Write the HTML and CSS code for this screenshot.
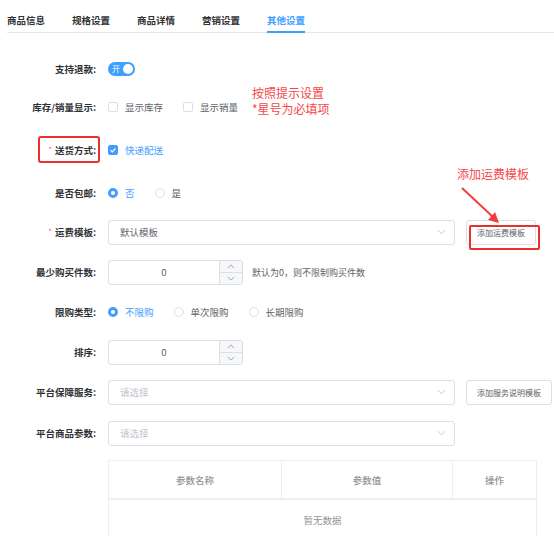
FILE: index.html
```html
<!DOCTYPE html>
<html lang="zh">
<head>
<meta charset="utf-8">
<link rel="stylesheet" href="styles.css">
</head>
<body>
<div class="page">
  <div class="tabs">
    <div class="tab">商品信息</div>
    <div class="tab">规格设置</div>
    <div class="tab">商品详情</div>
    <div class="tab">营销设置</div>
    <div class="tab active">其他设置</div>
  </div>

  <div class="form">
    <div class="row first">
      <div class="label">支持退款:</div>
      <div class="switch"><span class="switch-text">开</span><span class="knob"></span></div>
    </div>

    <div class="row tight">
      <div class="label">库存/销量显示:</div>
      <label class="option"><span class="checkbox"></span><span>显示库存</span></label>
      <label class="option"><span class="checkbox"></span><span>显示销量</span></label>
    </div>

    <div class="row wide">
      <div class="label"><span class="req">*</span>送货方式:</div>
      <label class="option checked"><span class="checkbox on"><svg viewBox="0 0 10 10" width="10" height="10"><path d="M2.6 5.1l1.7 1.7 3.2-3.4" fill="none" stroke="#fff" stroke-width="1.2"/></svg></span><span>快递配送</span></label>
    </div>

    <div class="row wide">
      <div class="label">是否包邮:</div>
      <label class="option checked"><span class="radio on"></span><span>否</span></label>
      <label class="option"><span class="radio"></span><span>是</span></label>
    </div>

    <div class="row snug">
      <div class="label"><span class="req">*</span>运费模板:</div>
      <div class="select"><span class="value">默认模板</span><svg class="chev" viewBox="0 0 10 6" width="9" height="6"><path d="M1 1l4 4 4-4" fill="none" stroke="#c0c4cc" stroke-width="1"/></svg></div>
      <button class="btn">添加运费模板</button>
    </div>

    <div class="row">
      <div class="label">最少购买件数:</div>
      <div class="number"><span class="num-value">0</span><span class="num-ctrl"><span class="num-btn"><svg viewBox="0 0 10 6" width="8" height="5"><path d="M1 5l4-4 4 4" fill="none" stroke="#909399" stroke-width="1"/></svg></span><span class="num-btn"><svg viewBox="0 0 10 6" width="8" height="5"><path d="M1 1l4 4 4-4" fill="none" stroke="#909399" stroke-width="1"/></svg></span></span></div>
      <span class="help">默认为0，则不限制购买件数</span>
    </div>

    <div class="row">
      <div class="label">限购类型:</div>
      <label class="option checked"><span class="radio on"></span><span>不限购</span></label>
      <label class="option"><span class="radio"></span><span>单次限购</span></label>
      <label class="option"><span class="radio"></span><span>长期限购</span></label>
    </div>

    <div class="row">
      <div class="label">排序:</div>
      <div class="number"><span class="num-value">0</span><span class="num-ctrl"><span class="num-btn"><svg viewBox="0 0 10 6" width="8" height="5"><path d="M1 5l4-4 4 4" fill="none" stroke="#909399" stroke-width="1"/></svg></span><span class="num-btn"><svg viewBox="0 0 10 6" width="8" height="5"><path d="M1 1l4 4 4-4" fill="none" stroke="#909399" stroke-width="1"/></svg></span></span></div>
    </div>

    <div class="row">
      <div class="label">平台保障服务:</div>
      <div class="select"><span class="placeholder">请选择</span><svg class="chev" viewBox="0 0 10 6" width="9" height="6"><path d="M1 1l4 4 4-4" fill="none" stroke="#c0c4cc" stroke-width="1"/></svg></div>
      <button class="btn">添加服务说明模板</button>
    </div>

    <div class="row loose">
      <div class="label">平台商品参数:</div>
      <div class="select"><span class="placeholder">请选择</span><svg class="chev" viewBox="0 0 10 6" width="9" height="6"><path d="M1 1l4 4 4-4" fill="none" stroke="#c0c4cc" stroke-width="1"/></svg></div>
    </div>

    <div class="table">
      <div class="thead">
        <div class="th c1">参数名称</div>
        <div class="th c2">参数值</div>
        <div class="th c3">操作</div>
      </div>
      <div class="empty">暂无数据</div>
    </div>
  </div>

  <div class="note">按照提示设置<br>*星号为必填项</div>
  <div class="mark-label"></div>
  <div class="note-tpl">添加运费模板</div>
  <svg class="arrow" viewBox="0 0 50 45" width="50" height="45">
    <path d="M7 5L38 34" stroke="#f0403e" stroke-width="2" fill="none"/>
    <path d="M33 37L44 40L40 29Z" fill="#f0403e"/>
  </svg>
  <div class="mark-btn"></div>
</div>
</body>
</html>
```

FILE: styles.css
```css
* { box-sizing: border-box; }
body {
  margin: 0;
  background: #fff;
  font-family: "Noto Sans CJK SC", "Noto Sans", sans-serif;
  font-size: 9.5px;
  color: #606266;
}
.page { position: relative; width: 554px; height: 536px; overflow: hidden; }

.tabs {
  display: flex;
  gap: 27px;
  margin-left: 7px;
  height: 33px;
  border-bottom: 1px solid #e4e7ed;
}
.tab {
  height: 32px;
  padding-top: 13px;
  line-height: 14px;
  font-weight: 700;
  color: #303133;
}
.tab.active {
  color: #409eff;
  height: 33px;
  border-bottom: 2px solid #409eff;
}

.form { display: flex; flex-direction: column; }
.row {
  display: flex;
  align-items: center;
  height: 26px;
  margin-top: 14px;
}
.row.first { margin-top: 23px; }
.row.tight { margin-top: 12px; }
.row.wide { margin-top: 17px; }
.row.snug { margin-top: 13px; }
.row.loose { margin-top: 15px; }

.label {
  width: 96px;
  margin-right: 12px;
  flex-shrink: 0;
  text-align: right;
  font-weight: 700;
  color: #303133;
  white-space: nowrap;
}
.req { color: #f56c6c; font-size: 8px; margin-right: 3px; font-weight: 400; vertical-align: 1px; }

.switch {
  position: relative;
  display: flex;
  align-items: center;
  width: 27px;
  height: 14px;
  border-radius: 7px;
  background: #409eff;
}
.switch-text { color: #fff; font-size: 8px; line-height: 14px; margin-left: 4px; }
.knob {
  position: absolute;
  right: 2px;
  top: 2px;
  width: 10px;
  height: 10px;
  border-radius: 50%;
  background: #fff;
}

.option {
  display: flex;
  align-items: center;
  gap: 7px;
  margin-right: 20px;
  color: #606266;
}
.option.checked { color: #409eff; }
.checkbox {
  display: block;
  width: 10px;
  height: 10px;
  border: 1px solid #dcdfe6;
  border-radius: 2px;
  background: #fff;
}
.checkbox.on { background: #409eff; border-color: #409eff; position: relative; }
.checkbox.on svg { position: absolute; left: -1px; top: -1px; }
.radio {
  display: block;
  width: 10px;
  height: 10px;
  border: 1px solid #dcdfe6;
  border-radius: 50%;
  background: #fff;
}
.radio.on { border: 3px solid #409eff; background: #fff; }

.select {
  display: flex;
  align-items: center;
  justify-content: space-between;
  width: 347px;
  height: 25px;
  padding: 0 8px 0 11px;
  border: 1px solid #dcdfe6;
  border-radius: 3px;
  background: #fff;
}
.value { color: #606266; }
.placeholder { color: #c0c4cc; }
.chev { display: block; }

.btn {
  height: 25px;
  margin-left: 11px;
  padding: 0 10px;
  border: 1px solid #dcdfe6;
  border-radius: 3px;
  background: #fff;
  font-family: inherit;
  font-size: 8px;
  color: #606266;
}

.number {
  display: flex;
  width: 135px;
  height: 25px;
  border: 1px solid #dcdfe6;
  border-radius: 3px;
  overflow: hidden;
}
.num-value {
  flex: 1;
  display: flex;
  align-items: center;
  justify-content: center;
  color: #606266;
}
.num-ctrl {
  width: 23px;
  display: flex;
  flex-direction: column;
  border-left: 1px solid #dcdfe6;
  background: #f5f7fa;
}
.num-btn {
  flex: 1;
  display: flex;
  align-items: center;
  justify-content: center;
}
.num-btn + .num-btn { border-top: 1px solid #dcdfe6; }
.num-btn svg { display: block; }
.help { margin-left: 9px; font-size: 9px; color: #606266; }

.table {
  margin: 14px 0 0 108px;
  width: 429px;
  border: 1px solid #ebeef5;
  border-bottom: none;
}
.thead { display: flex; height: 39px; border-bottom: 2px solid #ebeef5; }
.th {
  display: flex;
  align-items: center;
  justify-content: center;
  color: #909399;
  font-weight: 500;
}
.c1 { width: 173px; border-right: 1px solid #ebeef5; }
.c2 { width: 171px; border-right: 1px solid #ebeef5; }
.c3 { flex: 1; }
.empty {
  height: 40px;
  display: flex;
  align-items: center;
  justify-content: center;
  color: #909399;
}

.note {
  position: absolute;
  left: 252px;
  top: 85px;
  font-size: 12px;
  line-height: 15.5px;
  color: #f5474a;
}
.note-tpl {
  position: absolute;
  left: 457px;
  top: 166px;
  font-size: 12px;
  line-height: 16px;
  color: #f5474a;
}
.arrow { position: absolute; left: 455px; top: 183px; }
.mark-label {
  position: absolute;
  left: 38px;
  top: 136px;
  width: 62px;
  height: 27px;
  border: 2px solid #e8302f;
  border-radius: 3px;
}
.mark-btn {
  position: absolute;
  left: 469px;
  top: 225px;
  width: 71px;
  height: 25px;
  border: 2px solid #e8302f;
  border-radius: 2px;
}
```
